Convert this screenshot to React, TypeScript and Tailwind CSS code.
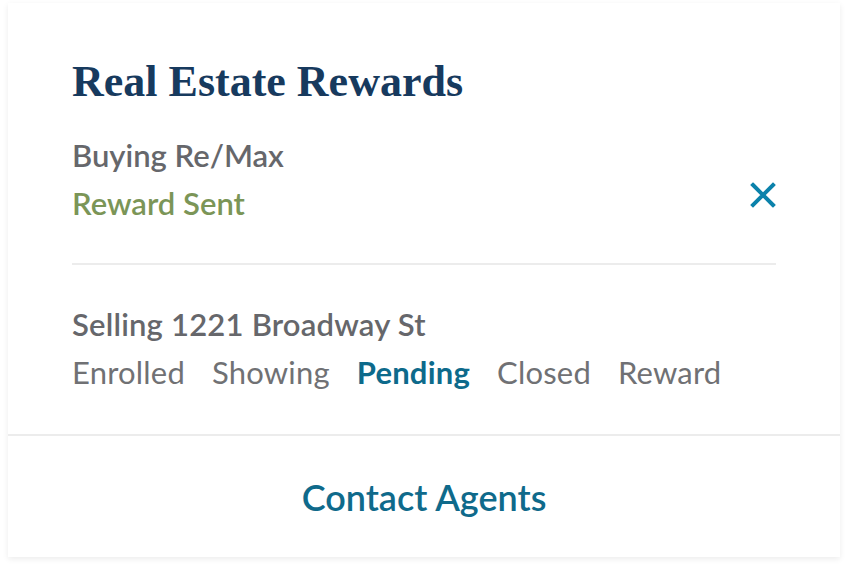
import React from "react";

const steps = ["Enrolled", "Showing", "Pending", "Closed", "Reward"];

const App = () => {
  return (
    <div className="w-[848px] h-[570px] bg-white pt-[3px] pl-[8px]">
      <div className="w-[832px] h-[554px] bg-white shadow-[0_2px_6px_rgba(0,0,0,0.08)] flex flex-col">
        <div className="px-16 pt-[55px]">
          <h1 className="font-['Liberation_Serif',serif] font-bold text-[44px] leading-[48px] text-[#173a5e]">
            Real Estate Rewards
          </h1>

          {/* Buying row */}
          <div className="flex items-end justify-between mt-[25px] pb-[36px] border-b-2 border-[#ececec]">
            <div className="font-['Lato',sans-serif] text-[31px] leading-[48px]">
              <div className="font-semibold text-[#66676b]">Buying Re/Max</div>
              <div className="font-semibold text-[#7b9557]">Reward Sent</div>
            </div>
            <button className="mb-[19px] text-[#0b82ab]">
              <svg width="26" height="26" viewBox="0 0 26 26">
                <path d="M3 3 L23 23 M23 3 L3 23" stroke="currentColor" strokeWidth="4" strokeLinecap="square" />
              </svg>
            </button>
          </div>

          {/* Selling row */}
          <div className="pt-[35px] pb-[38px] font-['Lato',sans-serif] text-[31px] leading-[48px] tracking-[0.2px]">
            <div className="font-semibold text-[#66676b]">Selling 1221 Broadway St</div>
            <div className="flex gap-[27px]">
              {steps.map((s) =>
                s === "Pending" ? (
                  <span key={s} className="font-bold text-[#0d6a8b]">{s}</span>
                ) : (
                  <span key={s} className="text-[#707174]">{s}</span>
                )
              )}
            </div>
          </div>
        </div>

        <div className="border-t-2 border-[#ececec] flex-1 flex items-center justify-center">
          <button className="font-['Lato',sans-serif] font-semibold text-[36px] text-[#0f6a8b]">
            Contact Agents
          </button>
        </div>
      </div>
    </div>
  );
};

export default App;
